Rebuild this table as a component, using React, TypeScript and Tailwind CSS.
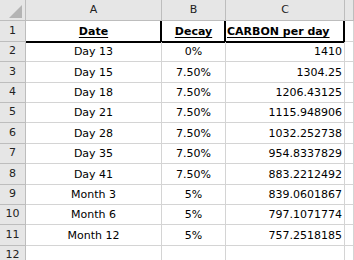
import React from "react";

const rows: [string, string, string][] = [
  ["Day 13", "0%", "1410"],
  ["Day 15", "7.50%", "1304.25"],
  ["Day 18", "7.50%", "1206.43125"],
  ["Day 21", "7.50%", "1115.948906"],
  ["Day 28", "7.50%", "1032.252738"],
  ["Day 35", "7.50%", "954.8337829"],
  ["Day 41", "7.50%", "883.2212492"],
  ["Month 3", "5%", "839.0601867"],
  ["Month 6", "5%", "797.1071774"],
  ["Month 12", "5%", "757.2518185"],
];

const heights = ["h-[20px]", "h-[21px]", "h-[20px]", "h-[20px]", "h-[21px]", "h-[20px]", "h-[21px]", "h-[20px]", "h-[20px]", "h-[21px]"];

const hdr = "bg-[#e6e6e6] border-r border-b border-[#bdbdbd] flex items-center justify-center text-[11px] text-[#222]";
const cell = "border-r border-b border-[#d4d4d4] flex items-end pb-[2px] leading-[14px] text-[11px] text-black whitespace-nowrap";

export default function App() {
  return (
    <div className="w-[354px] h-[260px] overflow-hidden bg-white" style={{ fontFamily: '"DejaVu Sans", Verdana, sans-serif' }}>
      <div className="flex h-[21px]">
        <div className="w-[26px] shrink-0 bg-[#e6e6e6] border-r border-b border-[#bdbdbd]">
          <svg width="25" height="20" className="block">
            <polygon points="22,5 22,18 9,18" fill="#b4b4b4" />
          </svg>
        </div>
        <div className={`w-[136px] shrink-0 ${hdr}`}>A</div>
        <div className={`w-[64px] shrink-0 ${hdr}`}>B</div>
        <div className={`w-[119px] shrink-0 ${hdr}`}>C</div>
        <div className={`flex-1 ${hdr}`}></div>
      </div>
      <div className="flex h-[21px]">
        <div className={`w-[26px] shrink-0 ${hdr}`}>1</div>
        <div className={`w-[136px] shrink-0 ${cell} justify-center font-bold underline underline-offset-2 border-b-black border-r-black shadow-[inset_-1px_0_0_#000]`}>Date</div>
        <div className={`w-[64px] shrink-0 ${cell} justify-center font-bold underline underline-offset-2 border-b-black border-r-black shadow-[inset_-1px_0_0_#000]`}>Decay</div>
        <div className={`w-[119px] shrink-0 ${cell} justify-start pl-[1px] font-bold underline underline-offset-2 border-b-black border-r-black shadow-[inset_-1px_0_0_#000]`}>CARBON per day</div>
        <div className={`flex-1 ${cell}`}></div>
      </div>
      {rows.map((r, i) => (
        <div key={i} className={`flex ${heights[i]}`}>
          <div className={`w-[26px] shrink-0 ${hdr}`}>{i + 2}</div>
          <div className={`w-[136px] shrink-0 ${cell} justify-center ${i === 0 ? "shadow-[inset_0_1px_0_#000]" : ""}`}>{r[0]}</div>
          <div className={`w-[64px] shrink-0 ${cell} justify-center ${i === 0 ? "shadow-[inset_0_1px_0_#000]" : ""}`}>{r[1]}</div>
          <div className={`w-[119px] shrink-0 ${cell} justify-end pr-[2px] ${i === 0 ? "shadow-[inset_0_1px_0_#000]" : ""}`}>{r[2]}</div>
          <div className={`flex-1 ${cell}`}></div>
        </div>
      ))}
      <div className="flex h-[20px]">
        <div className={`w-[26px] shrink-0 ${hdr}`}>12</div>
        <div className={`w-[136px] shrink-0 ${cell}`}></div>
        <div className={`w-[64px] shrink-0 ${cell}`}></div>
        <div className={`w-[119px] shrink-0 ${cell}`}></div>
        <div className={`flex-1 ${cell}`}></div>
      </div>
    </div>
  );
}
